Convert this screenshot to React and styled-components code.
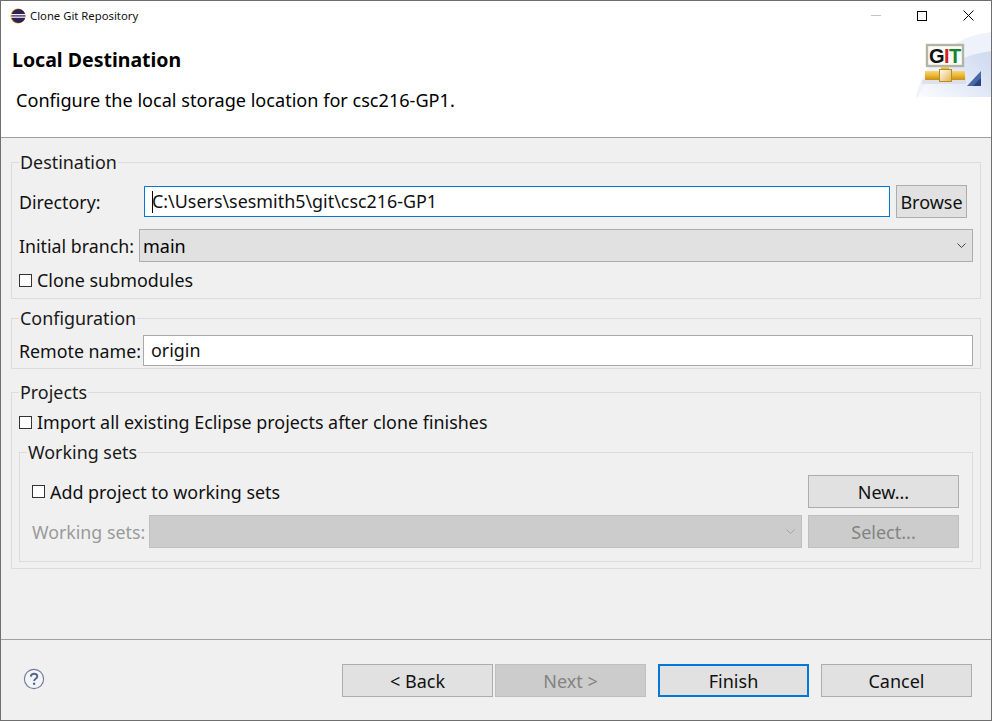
import React from "react";
import styled, { createGlobalStyle } from "styled-components";

const GlobalStyle = createGlobalStyle`
  html, body {
    margin: 0;
    padding: 0;
    background: #f0f0f0;
  }
  body {
    font-family: "Noto Sans", "Open Sans", sans-serif;
    font-size: 18px;
    color: #000;
  }
`;

const EclipseIcon = () => (
  <svg width="16" height="16" viewBox="0 0 16 16">
    <circle cx="8" cy="8" r="7.5" fill="#f7941e" />
    <circle cx="8.4" cy="8" r="7" fill="#2c2255" />
    <rect x="1" y="6" width="14.5" height="1.3" fill="#f4f0f8" />
    <rect x="1" y="8.5" width="14.5" height="1.3" fill="#f4f0f8" />
  </svg>
);

const HelpIcon = () => (
  <svg width="22" height="22" viewBox="0 0 22 22">
    <circle cx="11" cy="11" r="9.6" fill="#f4f5f8" stroke="#6d7b9c" strokeWidth="1.1" />
    <path
      d="M7.8 8.6c.2-1.8 1.5-2.8 3.3-2.8 1.9 0 3.2 1 3.2 2.6 0 2.4-3.2 2.3-3.2 4.6"
      fill="none"
      stroke="#56648a"
      strokeWidth="1.9"
    />
    <circle cx="11.1" cy="15.7" r="1.2" fill="#56648a" />
  </svg>
);

const GitBanner = () => (
  <svg width="75" height="66" viewBox="0 0 75 66">
    <defs>
      <linearGradient id="swoosh" x1="0" y1="1" x2="1" y2="0.3">
        <stop offset="0" stopColor="#fbfcfe" />
        <stop offset="1" stopColor="#d3ddf2" />
      </linearGradient>
      <linearGradient id="pipe" x1="0" y1="0" x2="0" y2="1">
        <stop offset="0" stopColor="#f7d777" />
        <stop offset="0.5" stopColor="#eeb732" />
        <stop offset="1" stopColor="#c48f1c" />
      </linearGradient>
      <linearGradient id="valve" x1="0" y1="0" x2="1" y2="1">
        <stop offset="0" stopColor="#ffffff" />
        <stop offset="1" stopColor="#e5b040" />
      </linearGradient>
    </defs>
    <path d="M0 66 C6 36 32 6 75 1 V66 Z" fill="#eef2fa" />
    <path d="M2 66 C12 44 36 26 75 20 V66 Z" fill="url(#swoosh)" />
    <path d="M6 49 L50 46 V53 H6 Z" fill="#d8d9df" opacity="0.7" />
    <rect x="11" y="14" width="36" height="21" fill="#fbfdf9" stroke="#b4b4a4" strokeWidth="2.4" />
    <text x="13" y="32" fontFamily="Liberation Sans" fontWeight="700" fontSize="20" fill="#111">G</text>
    <text x="28" y="32" fontFamily="Liberation Sans" fontWeight="700" fontSize="20" fill="#d32027">I</text>
    <text x="33" y="32" fontFamily="Liberation Sans" fontWeight="700" fontSize="20" fill="#14842c">T</text>
    <rect x="25" y="36" width="8" height="3" fill="url(#pipe)" />
    <rect x="9" y="40" width="40" height="9" fill="url(#pipe)" />
    <rect x="23.5" y="38.5" width="12" height="12" fill="url(#valve)" stroke="#b98a2a" />
    <path d="M51 55 L65 40 V55 Z" fill="#4a68a6" />
    <path d="M57 55 L65 47 V55 Z" fill="#29457f" />
  </svg>
);

const Window = styled.div`
  box-sizing: border-box;
  width: 992px;
  height: 721px;
  display: flex;
  flex-direction: column;
  background: #f0f0f0;
  border: 1px solid #6f6f6f;
  overflow: hidden;
`;

const TitleBar = styled.div`
  height: 29px;
  flex: none;
  display: flex;
  align-items: center;
  gap: 4px;
  padding-left: 9px;
  background: #fff;
  font-size: 11.3px;
  color: #111;
`;

const TitleText = styled.span`
  flex: 1;
`;

const Controls = styled.div`
  display: flex;
  align-items: center;
`;

const WinControl = styled.div`
  width: 46px;
  height: 29px;
  display: flex;
  align-items: center;
  justify-content: center;
`;

const Header = styled.div`
  position: relative;
  flex: none;
  height: 108px;
  box-sizing: border-box;
  background: #fff;
  border-bottom: 1px solid #a0a0a0;
  padding: 17px 0 0 11px;
`;

const BannerSlot = styled.div`
  position: absolute;
  right: 0;
  top: 1px;
  line-height: 0;
`;

const HeaderTitle = styled.div`
  font-weight: 700;
  font-size: 19.5px;
  line-height: 25px;
`;

const HeaderSub = styled.div`
  font-size: 18.1px;
  line-height: 24px;
  margin: 16px 0 0 4px;
`;

const Body = styled.div`
  flex: 1;
  display: flex;
  flex-direction: column;
  padding: 13px 10px 0 10px;
`;

const Group = styled.fieldset`
  margin: ${(p) => p.$mt || 0}px 0 0 0;
  padding: ${(p) => p.$pad || "0 7px 0 7px"};
  border: 1px solid #dcdcdc;
  min-width: 0;
  height: ${(p) => p.$h}px;
  box-sizing: border-box;
`;

const Legend = styled.legend`
  padding: 0 1px;
  margin-left: ${(p) => p.$ml || 0}px;
  font-size: 17.9px;
  line-height: 22px;
  color: #1a1a1a;
`;

const Row = styled.div`
  display: flex;
  align-items: center;
  height: ${(p) => p.$h || 33}px;
  margin-top: ${(p) => p.$mt || 0}px;
`;

const Label = styled.span`
  font-size: 17.8px;
  width: ${(p) => (p.$w ? `${p.$w}px` : "auto")};
  flex: none;
  color: ${(p) => (p.$off ? "#9a9a9a" : "#111")};
  white-space: nowrap;
`;

const TextField = styled.div`
  box-sizing: border-box;
  height: 31px;
  flex: ${(p) => (p.$w ? "none" : 1)};
  width: ${(p) => (p.$w ? `${p.$w}px` : "auto")};
  background: #fff;
  border: 1px solid ${(p) => (p.$focus ? "#0078d7" : "#a9a9a9")};
  font-size: 17.9px;
  line-height: 29px;
  padding-left: 7px;
  color: #111;
`;

const Caret = styled.span`
  display: inline-block;
  width: 1px;
  height: 22px;
  margin-right: -1px;
  background: #000;
  vertical-align: -5px;
`;

const Select = styled.div`
  box-sizing: border-box;
  height: 33px;
  flex: 1;
  display: flex;
  align-items: center;
  justify-content: space-between;
  padding: 0 6px 0 3px;
  font-size: 18px;
  background: ${(p) => (p.$off ? "#cccccc" : "#e1e1e1")};
  border: 1px solid ${(p) => (p.$off ? "#bfbfbf" : "#adadad")};
`;

const Chevron = ({ color }) => (
  <svg width="9" height="5" viewBox="0 0 9 5">
    <path d="M0.5 0.5 L4.5 4.5 L8.5 0.5" fill="none" stroke={color} />
  </svg>
);

const Button = styled.div`
  box-sizing: border-box;
  flex: none;
  width: ${(p) => p.$w || 151}px;
  height: 33px;
  display: flex;
  align-items: center;
  justify-content: center;
  font-size: 18px;
  color: ${(p) => (p.$off ? "#838383" : "#111")};
  background: ${(p) => (p.$off ? "#cccccc" : "#e1e1e1")};
  border: ${(p) => (p.$primary ? "2px solid #0078d7" : `1px solid ${p.$off ? "#bfbfbf" : "#adadad"}`)};
`;

const CheckRow = styled.label`
  display: flex;
  align-items: center;
  gap: 5px;
  flex: ${(p) => (p.$grow ? 1 : "none")};
  font-size: 17.9px;
  color: #111;
  height: 24px;
  margin-top: ${(p) => p.$mt || 0}px;
`;

const CheckBox = styled.span`
  box-sizing: border-box;
  width: 13px;
  height: 13px;
  background: #fff;
  border: 1px solid #333;
  flex: none;
`;

const Footer = styled.div`
  flex: none;
  height: 81px;
  box-sizing: border-box;
  border-top: 1px solid #a0a0a0;
  display: flex;
  align-items: flex-start;
  padding: 24px 19px 0 22px;
`;

const HelpSlot = styled.div`
  line-height: 0;
  margin-right: auto;
  margin-top: 4px;
`;

const Spacer = styled.div`
  width: ${(p) => p.$w}px;
  flex: none;
`;

export default function App() {
  return (
    <>
      <GlobalStyle />
      <Window>
        <TitleBar>
          <EclipseIcon />
          <TitleText>Clone Git Repository</TitleText>
          <Controls>
            <WinControl>
              <svg width="10" height="1" viewBox="0 0 10 1">
                <rect width="10" height="1" fill="#c4c4c4" />
              </svg>
            </WinControl>
            <WinControl>
              <svg width="10" height="10" viewBox="0 0 10 10">
                <rect x="0.5" y="0.5" width="9" height="9" fill="none" stroke="#000" />
              </svg>
            </WinControl>
            <WinControl>
              <svg width="11" height="11" viewBox="0 0 11 11">
                <path d="M0.5 0.5 L10.5 10.5 M10.5 0.5 L0.5 10.5" stroke="#000" fill="none" />
              </svg>
            </WinControl>
          </Controls>
        </TitleBar>

        <Header>
          <HeaderTitle>Local Destination</HeaderTitle>
          <HeaderSub>Configure the local storage location for csc216-GP1.</HeaderSub>
          <BannerSlot>
            <GitBanner />
          </BannerSlot>
        </Header>

        <Body>
          <Group $h={148}>
            <Legend>Destination</Legend>
            <Row $mt={12}>
              <Label $w={125}>Directory:</Label>
              <TextField $focus $w={746}>
                <Caret />C:\Users\sesmith5\git\csc216-GP1
              </TextField>
              <Spacer $w={6} />
              <Button $w={71}>Browse</Button>
            </Row>
            <Row $mt={11}>
              <Label $w={120}>Initial branch:</Label>
              <Select>
                main
                <Chevron color="#444" />
              </Select>
            </Row>
            <CheckRow $mt={6}>
              <CheckBox />
              Clone submodules
            </CheckRow>
          </Group>

          <Group $mt={8} $h={62}>
            <Legend>Configuration</Legend>
            <Row $mt={5}>
              <Label $w={124}>Remote name:</Label>
              <TextField>origin</TextField>
            </Row>
          </Group>

          <Group $mt={12} $h={188}>
            <Legend>Projects</Legend>
            <CheckRow $mt={7}>
              <CheckBox />
              Import all existing Eclipse projects after clone finishes
            </CheckRow>
            <Group $mt={7} $h={121} $pad="0 13px 0 12px">
              <Legend $ml={-5}>Working sets</Legend>
              <Row $mt={12}>
                <CheckRow $grow>
                  <CheckBox />
                  Add project to working sets
                </CheckRow>
                <Button>New...</Button>
              </Row>
              <Row $mt={7}>
                <Label $w={117} $off>
                  Working sets:
                </Label>
                <Select $off>
                  <span />
                  <Chevron color="#a5a5a5" />
                </Select>
                <Spacer $w={6} />
                <Button $off>Select...</Button>
              </Row>
            </Group>
          </Group>
        </Body>

        <Footer>
          <HelpSlot>
            <HelpIcon />
          </HelpSlot>
          <Button>&lt; Back</Button>
          <Spacer $w={2} />
          <Button $off>Next &gt;</Button>
          <Spacer $w={12} />
          <Button $primary>Finish</Button>
          <Spacer $w={12} />
          <Button>Cancel</Button>
        </Footer>
      </Window>
    </>
  );
}
